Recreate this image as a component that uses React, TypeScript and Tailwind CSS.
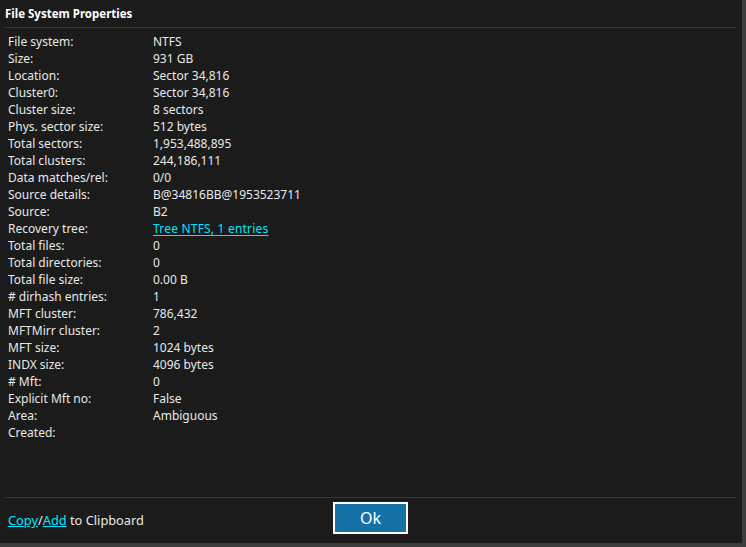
const rows: [string, string, boolean?][] = [
  ["File system:", "NTFS"],
  ["Size:", "931 GB"],
  ["Location:", "Sector 34,816"],
  ["Cluster0:", "Sector 34,816"],
  ["Cluster size:", "8 sectors"],
  ["Phys. sector size:", "512 bytes"],
  ["Total sectors:", "1,953,488,895"],
  ["Total clusters:", "244,186,111"],
  ["Data matches/rel:", "0/0"],
  ["Source details:", "B@34816BB@1953523711"],
  ["Source:", "B2"],
  ["Recovery tree:", "Tree NTFS, 1 entries", true],
  ["Total files:", "0"],
  ["Total directories:", "0"],
  ["Total file size:", "0.00 B"],
  ["# dirhash entries:", "1"],
  ["MFT cluster:", "786,432"],
  ["MFTMirr cluster:", "2"],
  ["MFT size:", "1024 bytes"],
  ["INDX size:", "4096 bytes"],
  ["# Mft:", "0"],
  ["Explicit Mft no:", "False"],
  ["Area:", "Ambiguous"],
  ["Created:", ""],
];

export default function App() {
  return (
    <div className="w-[746px] h-[547px] bg-[#3c3c3c] font-['Noto_Sans',sans-serif] text-[#e8e8e8]">
      <div className="w-[742px] h-[543px] bg-[#1b1b1b] flex flex-col px-[5px]">
        {/* Title */}
        <div className="h-[28px] flex items-center font-bold text-[11.5px] text-white border-b border-[#363636] mr-[1px]">
          File System Properties
        </div>

        {/* Properties */}
        <div className="flex-1 pt-[5px] pl-[3px] text-[12px]">
          {rows.map(([label, value, link]) => (
            <div key={label} className="flex h-[17px] items-center">
              <div className="w-[145px]">{label}</div>
              {link ? (
                <a className="text-[#00e8ff] underline underline-offset-2 tracking-[0.2px]">{value}</a>
              ) : (
                <div>{value}</div>
              )}
            </div>
          ))}
        </div>

        {/* Footer */}
        <div className="h-[46px] border-t border-[#363636] flex items-start pt-[4px] mr-[1px]">
          <div className="w-[328px] h-[32px] pl-[3px] pt-[6px] flex items-center text-[12.8px]">
            <span>
              <a className="text-[#00e8ff] underline">Copy</a>/
              <a className="text-[#00e8ff] underline">Add</a> to Clipboard
            </span>
          </div>
          <button className="w-[75px] h-[32px] border-2 border-white bg-[#1570a6] text-white text-[16px] leading-none">
            Ok
          </button>
        </div>
      </div>
    </div>
  );
}
